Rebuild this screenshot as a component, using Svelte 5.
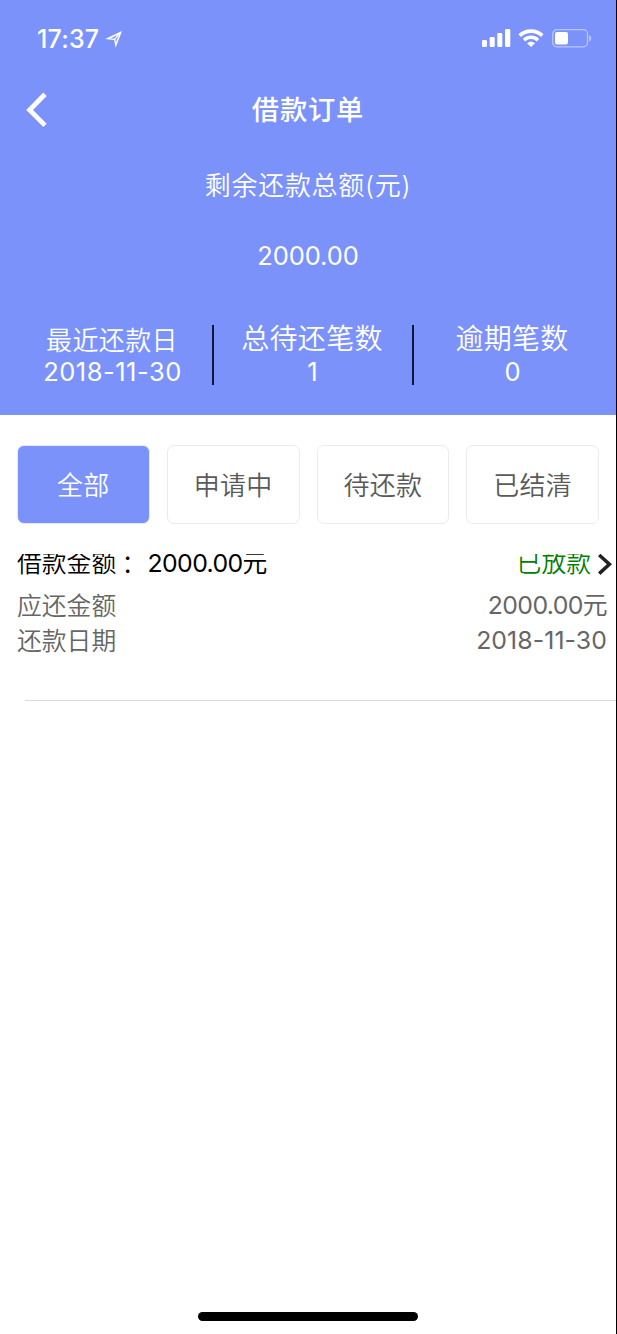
<script>
  const stats = [
    { label: '最近还款日', value: '2018-11-30', kind: 'date' },
    { label: '总待还笔数', value: '1', kind: 'count' },
    { label: '逾期笔数', value: '0', kind: 'count' }
  ];
  const tabs = ['全部', '申请中', '待还款', '已结清'];
  let active = $state(0);
</script>

<div class="screen">
  <header>
    <div class="status">
      <div class="clock">
        <span class="time">17:37</span>
        <svg width="18" height="18" viewBox="0 0 18 18">
          <path fill-rule="evenodd" d="M.2 9 17 1 10.6 17.8 9.1 10ZM5.4 8.5 10.3 8.8 10.9 12.2 14.2 4.3Z" fill="#fff" />
          <path d="M9.6 9.4 15.6 2.4" stroke="#fff" stroke-width="1.2" />
        </svg>
      </div>
      <div class="indicators">
        <svg width="29" height="18" viewBox="0 0 29 18" fill="#fff">
          <rect x="0" y="11" width="5" height="7" rx="1.3" />
          <rect x="7.7" y="8" width="5" height="10" rx="1.3" />
          <rect x="15.3" y="4" width="5" height="14" rx="1.3" />
          <rect x="23" y="0" width="5.3" height="18" rx="1.3" />
        </svg>
        <svg class="wifi" width="26" height="18" viewBox="0 0 26 18">
          <path d="M1.7 6.6C8 .5 18 .5 24.3 6.6" fill="none" stroke="#fff" stroke-width="3.7" />
          <path d="M6 11.2C10 7.4 16 7.4 20 11.2" fill="none" stroke="#fff" stroke-width="3.5" />
          <path d="M9 14.2C11.3 12.1 14.7 12.1 17 14.2L13 18Z" fill="#fff" />
        </svg>
        <svg class="battery" width="40" height="19" viewBox="0 0 40 19">
          <rect x=".7" y=".7" width="34.8" height="17.2" rx="4.4" fill="none" stroke="#b9c5fe" stroke-width="1.3" />
          <rect x="3" y="3" width="13" height="12.4" rx="2" fill="#fff" />
          <path d="M37.2 6.2C40 7 40 11.6 37.2 12.4Z" fill="#b9c5fe" />
        </svg>
      </div>
    </div>

    <nav>
      <button class="back" aria-label="返回">
        <svg width="24" height="38" viewBox="0 0 24 38">
          <path d="M20 3.2 4.6 19 20 34.4" fill="none" stroke="#fff" stroke-width="4.8" />
        </svg>
      </button>
      <h1>借款订单</h1>
    </nav>

    <div class="total-label">剩余还款总额(元)</div>
    <div class="total">2000.00</div>

    <div class="stats">
      {#each stats as s}
        <div class="stat {s.kind}">
          <div class="label">{s.label}</div>
          <div class="value">{s.value}</div>
        </div>
      {/each}
    </div>
  </header>

  <div class="tabs">
    {#each tabs as tab, i}
      <button class="tab" class:active={active === i} onclick={() => (active = i)}>{tab}</button>
    {/each}
  </div>

  <main>
    <article>
      <div class="row head">
        <div><span>借款金额</span><span class="colon">：</span><span class="amount">2000.00元</span></div>
        <div class="state">
          <span>已放款</span>
          <svg width="16" height="22" viewBox="0 0 16 22">
            <path d="M2.2 1 12.4 10.2 2.2 19.6" fill="none" stroke="#222" stroke-width="3.5" />
          </svg>
        </div>
      </div>
      <div class="row"><span>应还金额</span><span class="money">2000.00元</span></div>
      <div class="row"><span>还款日期</span><span class="due">2018-11-30</span></div>
    </article>
  </main>

  <footer><div class="home"></div></footer>
</div>

<style>
  .screen {
    box-sizing: border-box;
    width: 617px;
    height: 1334px;
    display: flex;
    flex-direction: column;
    background: #fff;
    border-right: 1px solid #000;
    font-family: Inter, 'Noto Sans CJK SC', sans-serif;
    font-weight: 350;
    white-space: nowrap;
    overflow: hidden;
  }
  button {
    font: inherit;
    padding: 0;
    border: 0;
    background: none;
  }
  svg { display: block; flex: none; }
  header {
    height: 414.5px;
    flex: none;
    background: #7c92fb;
    color: #fff;
    text-align: center;
  }
  .status {
    box-sizing: border-box;
    height: 76px;
    padding: 0 24px 0 37px;
    display: flex;
    align-items: center;
    justify-content: space-between;
  }
  .clock, .indicators { display: flex; align-items: center; }
  .clock { gap: 6px; padding-top: 1px; }
  .time { font-size: 25px; font-weight: 550; line-height: 30px; letter-spacing: .2px; }
  .wifi { margin-left: 7px; }
  .battery { margin-left: 8px; }
  nav {
    height: 66px;
    display: grid;
    grid-template-columns: 60px 1fr 60px;
    align-items: center;
  }
  .back { padding: 1px 0 0 25px; }
  h1 { margin: 0; padding-top: 3px; font-size: 27.3px; font-weight: 500; line-height: 40px; letter-spacing: .8px; }
  .total-label { height: 86px; font-size: 26px; line-height: 88px; letter-spacing: .7px; }
  .total { font-size: 25.5px; line-height: 56px; font-weight: 400; letter-spacing: -.1px; }
  .stats {
    display: grid;
    grid-template-columns: repeat(3, 200px);
    padding: 40.5px 0 0 14px;
  }
  .stat {
    box-sizing: border-box;
    height: 60px;
    border-right: 2px solid #10163a;
  }
  .stat:last-child { border-color: transparent; }
  .label { margin-left: -2px; font-size: 28px; line-height: 29px; letter-spacing: .3px; }
  .value { margin-left: -1px; font-size: 25.5px; line-height: 36px; font-weight: 400; }
  .date .label { margin-left: -2px; font-size: 26px; line-height: 32px; letter-spacing: .4px; }
  .date .value { margin-left: -1px; line-height: 29px; letter-spacing: .5px; }
  .tabs {
    display: grid;
    grid-template-columns: repeat(4, 1fr);
    gap: 17px;
    padding: 30.5px 17px 0;
  }
  .tab {
    height: 79px;
    padding-bottom: 2px;
    border: 1.5px solid #ebebee;
    border-radius: 7px;
    color: #5a5a5a;
    font-size: 26px;
    letter-spacing: .3px;
  }
  .tab.active { background: #7c92fb; border-color: #e6eaff; color: #fff; }
  main { flex: 1; padding-top: 30px; }
  article {
    height: 146px;
    margin-left: 25px;
    border-bottom: 1px solid #ddd;
  }
  .row {
    display: flex;
    justify-content: space-between;
    margin-left: -8px;
    padding-right: 9px;
    height: 35px;
    line-height: 35px;
    font-size: 24.8px;
    color: #666;
  }
  .row > span:first-child { line-height: 36px; }
  .row.head {
    height: 34px;
    line-height: 19px;
    padding-right: 3px;
    color: #000;
    overflow: hidden;
  }
  .colon { margin-left: -1px; font-family: 'Noto Sans CJK TC', sans-serif; line-height: 1px; vertical-align: -2px; }
  .amount { margin-left: 7.5px; }
  .amount, .money { font-weight: 400; letter-spacing: -.6px; }
  .due { font-weight: 400; letter-spacing: .1px; }
  .state { display: flex; gap: 6px; color: #008000; }
  footer { height: 22px; display: flex; justify-content: center; }
  .home { width: 220px; height: 9px; border-radius: 5px; background: #000; }
</style>
